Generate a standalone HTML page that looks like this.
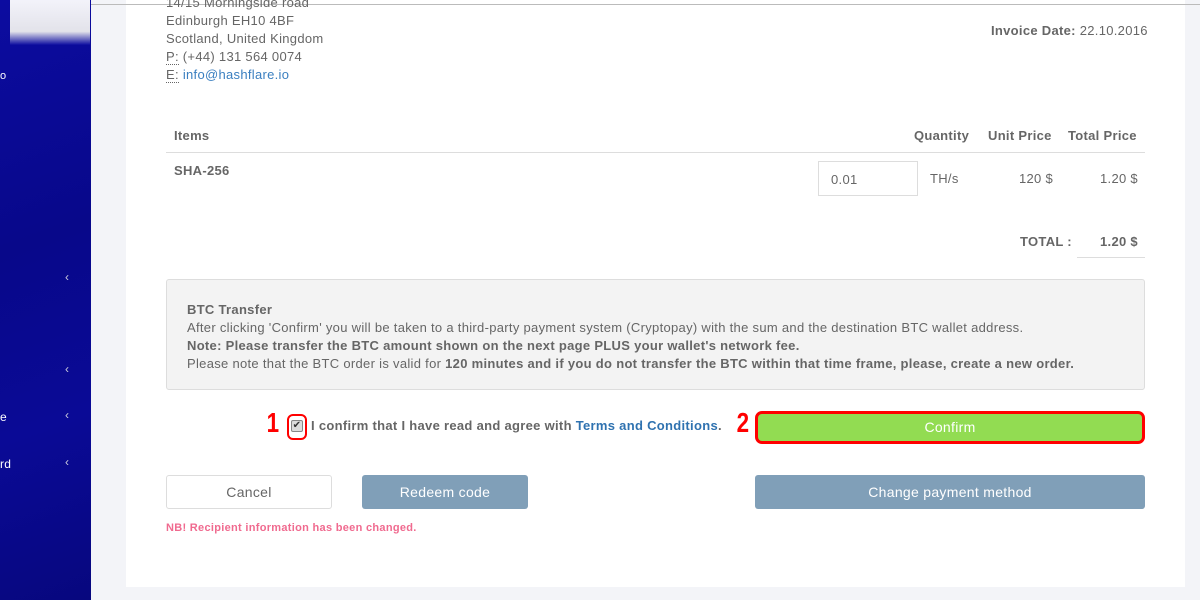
<!DOCTYPE html>
<html><head><meta charset="utf-8"><style>
*{margin:0;padding:0;box-sizing:border-box}
body{width:1200px;height:600px;overflow:hidden;background:#f3f4f8;font-family:"Liberation Sans",sans-serif;color:#666;position:relative;font-size:13px;letter-spacing:0.3px}
.a{position:absolute}
.side{left:0;top:0;width:91px;height:600px;background:linear-gradient(160deg,#0c0ca0 0%,#08088a 40%,#0a0a96 70%,#07077e 100%)}
.card{left:126px;top:0;width:1059px;height:587px;background:#fff}
.topline{left:91px;top:4px;width:1109px;height:1px;background:#bbb}
.b{font-weight:bold;color:#666}
.chev{color:#ccd;font-size:12px;left:65px}
.btn{border-radius:3px;text-align:center;color:#fff;font-size:14px}
</style></head><body>
<div class="a side"></div>
<div class="a" style="left:10px;top:0;width:80px;height:45px;background:linear-gradient(#fff 0%,#eee 70%,#0c0ca0 100%);opacity:.95"></div>
<div class="a" style="left:0;top:70px;color:#fff;font-size:11px">o</div>
<div class="a chev" style="top:270px">‹</div>
<div class="a chev" style="top:362px">‹</div>
<div class="a chev" style="top:408px">‹</div>
<div class="a chev" style="top:455px">‹</div>
<div class="a" style="left:0;top:410px;color:#fff;font-size:12px">e</div>
<div class="a" style="left:0;top:457px;color:#fff;font-size:12px">rd</div>
<div class="a card"></div>
<div class="a topline"></div>
<div class="a" style="left:166px;top:-6px;line-height:18px;font-size:13px">
14/15 Morningside road<br>Edinburgh EH10 4BF<br>Scotland, United Kingdom<br><span style="border-bottom:1px dotted #666">P:</span> (+44) 131 564 0074<br><span style="border-bottom:1px dotted #666">E:</span> <span style="color:#3a7fc0">info@hashflare.io</span></div>
<div class="a" style="left:991px;top:23px"><span class="b">Invoice Date:</span> 22.10.2016</div>
<div class="a b" style="left:174px;top:128px">Items</div>
<div class="a b" style="left:914px;top:128px">Quantity</div>
<div class="a b" style="left:988px;top:128px">Unit Price</div>
<div class="a b" style="left:1068px;top:128px">Total Price</div>
<div class="a" style="left:166px;top:152px;width:979px;height:1px;background:#ddd"></div>
<div class="a b" style="left:174px;top:163px">SHA-256</div>
<div class="a" style="left:818px;top:161px;width:100px;height:35px;border:1px solid #ddd;padding:10px 12px">0.01</div>
<div class="a" style="left:930px;top:171px">TH/s</div>
<div class="a" style="left:1019px;top:171px">120 $</div>
<div class="a" style="left:1100px;top:171px">1.20 $</div>
<div class="a b" style="left:1020px;top:234px">TOTAL :</div>
<div class="a b" style="left:1100px;top:234px">1.20 $</div>
<div class="a" style="left:1077px;top:257px;width:68px;height:1px;background:#ddd"></div>
<div class="a" style="left:166px;top:279px;width:979px;height:111px;background:#f3f3f3;border:1px solid #ddd;border-radius:3px;padding:21px 20px;line-height:18px">
<span class="b">BTC Transfer</span><br>After clicking 'Confirm' you will be taken to a third-party payment system (Cryptopay) with the sum and the destination BTC wallet address.<br><span class="b">Note: Please transfer the BTC amount shown on the next page PLUS your wallet's network fee.</span><br>Please note that the BTC order is valid for <span class="b">120 minutes and if you do not transfer the BTC within that time frame, please, create a new order.</span></div>
<div class="a" style="left:265px;top:407px;color:#f00;font-weight:bold;font-size:28px;transform:scaleX(.8)">1</div>
<div class="a" style="left:287px;top:414px;width:20px;height:26px;border:2px solid #f00;border-radius:6px"></div>
<div class="a" style="left:291px;top:420px;width:12px;height:12px;border:1px solid #888;border-radius:2px;background:#ddd;font-size:10px;line-height:10px;text-align:center;color:#333">✔</div>
<div class="a b" style="left:311px;top:418px">I confirm that I have read and agree with <span style="color:#2f72b0">Terms and Conditions</span>.</div>
<div class="a" style="left:735px;top:407px;color:#f00;font-weight:bold;font-size:28px;transform:scaleX(.8)">2</div>
<div class="a btn" style="left:755px;top:411px;width:390px;height:33px;background:#92dc52;border:3px solid #f00;border-radius:7px;line-height:27px">Confirm</div>
<div class="a btn" style="left:166px;top:475px;width:166px;height:34px;border:1px solid #ddd;color:#666;line-height:32px">Cancel</div>
<div class="a btn" style="left:362px;top:475px;width:166px;height:34px;background:#809fb8;line-height:34px">Redeem code</div>
<div class="a btn" style="left:755px;top:475px;width:390px;height:34px;background:#809fb8;line-height:34px">Change payment method</div>
<div class="a" style="left:166px;top:522px;color:#f06a8f;font-weight:bold;font-size:11px">NB! Recipient information has been changed.</div>
</body></html>
